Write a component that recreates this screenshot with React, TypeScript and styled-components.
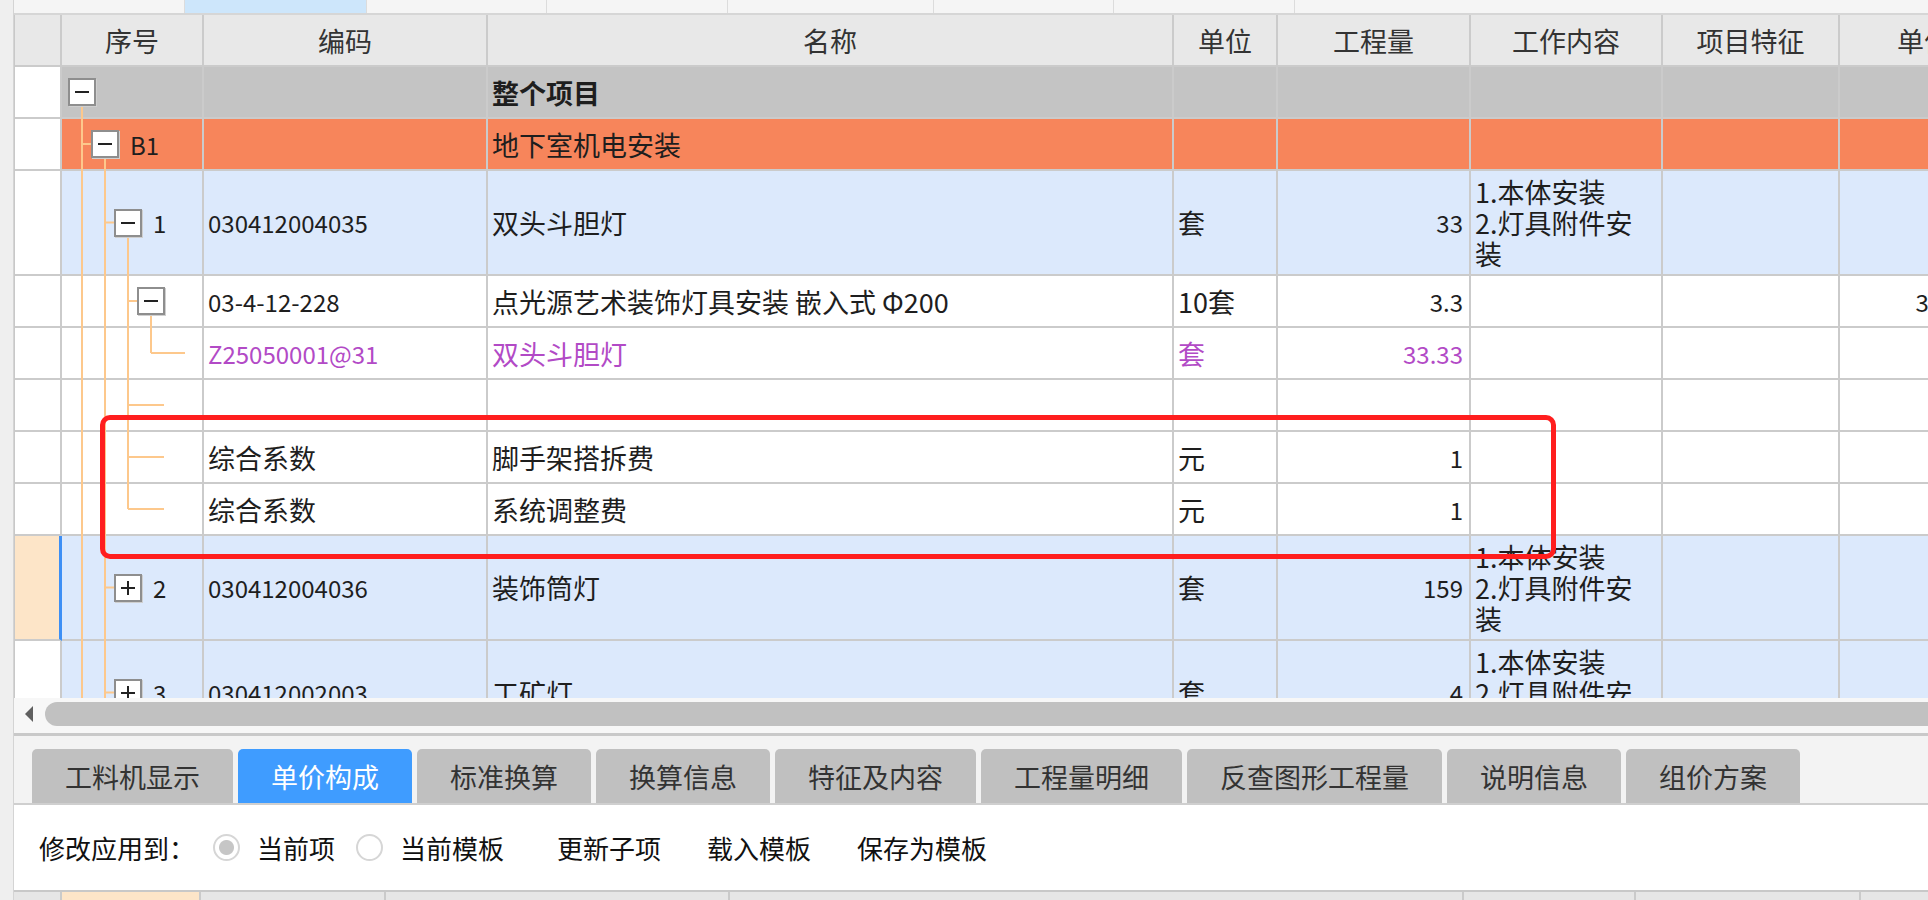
import React from "react";
import styled, { createGlobalStyle } from "styled-components";

const GlobalStyle = createGlobalStyle`
  html, body {
    margin: 0;
    padding: 0;
  }
  body {
    width: 1928px;
    height: 900px;
    overflow: hidden;
    background: #f4f4f4;
    font-family: "Noto Sans CJK SC", "Noto Sans", sans-serif;
    color: #1e1e1e;
  }
`;

const COLS = "47px 142px 284px 686px 104px 193px 192px 177px 170px";
const LINE = "#cbcbcb";
const GUIDE = "#fdc88c";

type Tone = "root" | "group" | "item" | "plain";

const toneBg: Record<Tone, string> = {
  root: "#c4c4c4",
  group: "#f7855b",
  item: "#dce9fc",
  plain: "#ffffff",
};

interface TreeSpec {
  full: number[];
  upTo?: number;
  tick?: [number, number];
  down?: number;
  box?: { level: number; sign: "-" | "+" };
  indent: number;
  label?: string;
}

interface RowData {
  tone: Tone;
  h: number;
  tree: TreeSpec;
  code?: string;
  name?: string;
  unit?: string;
  qty?: string;
  work?: string;
  price?: string;
  bold?: boolean;
  purple?: boolean;
  marked?: boolean;
}

const WORK = "1.本体安装\n2.灯具附件安\n装";

const rows: RowData[] = [
  {
    tone: "root",
    h: 52,
    tree: { full: [], down: 0, box: { level: 0, sign: "-" }, indent: 0 },
    name: "整个项目",
    bold: true,
  },
  {
    tone: "group",
    h: 52,
    tree: { full: [0], tick: [20, 29], down: 1, box: { level: 1, sign: "-" }, indent: 1, label: "B1" },
    name: "地下室机电安装",
  },
  {
    tone: "item",
    h: 105,
    tree: { full: [0, 1], tick: [43, 52], down: 2, box: { level: 2, sign: "-" }, indent: 2, label: "1" },
    code: "030412004035",
    name: "双头斗胆灯",
    unit: "套",
    qty: "33",
    work: WORK,
  },
  {
    tone: "plain",
    h: 52,
    tree: { full: [0, 1, 2], tick: [66, 75], down: 3, box: { level: 3, sign: "-" }, indent: 3 },
    code: "03-4-12-228",
    name: "点光源艺术装饰灯具安装 嵌入式 Φ200",
    unit: "10套",
    qty: "3.3",
    price: "3366.92",
  },
  {
    tone: "plain",
    h: 52,
    tree: { full: [0, 1, 2], upTo: 3, tick: [89, 123], indent: 4 },
    code: "Z25050001@31",
    name: "双头斗胆灯",
    unit: "套",
    qty: "33.33",
    purple: true,
  },
  {
    tone: "plain",
    h: 52,
    tree: { full: [0, 1, 2], tick: [66, 102], indent: 3 },
  },
  {
    tone: "plain",
    h: 52,
    tree: { full: [0, 1, 2], tick: [66, 102], indent: 3 },
    code: "综合系数",
    name: "脚手架搭拆费",
    unit: "元",
    qty: "1",
  },
  {
    tone: "plain",
    h: 52,
    tree: { full: [0, 1], upTo: 2, tick: [66, 102], indent: 3 },
    code: "综合系数",
    name: "系统调整费",
    unit: "元",
    qty: "1",
  },
  {
    tone: "item",
    h: 105,
    tree: { full: [0, 1], tick: [43, 52], box: { level: 2, sign: "+" }, indent: 2, label: "2" },
    code: "030412004036",
    name: "装饰筒灯",
    unit: "套",
    qty: "159",
    work: WORK,
    marked: true,
  },
  {
    tone: "item",
    h: 105,
    tree: { full: [0, 1], tick: [43, 52], box: { level: 2, sign: "+" }, indent: 2, label: "3" },
    code: "030412002003",
    name: "工矿灯",
    unit: "套",
    qty: "4",
    work: WORK,
  },
];

const headers = ["", "序号", "编码", "名称", "单位", "工程量", "工作内容", "项目特征", "单价"];

const topCells = [171, 182, 180, 181, 206, 180, 181];

const tabs = [
  "工料机显示",
  "单价构成",
  "标准换算",
  "换算信息",
  "特征及内容",
  "工程量明细",
  "反查图形工程量",
  "说明信息",
  "组价方案",
];

const bottomCols = [48, 139, 185, 344, 734, 172, 225, 200];

const isLatin = (s?: string) => !!s && /^[\x00-\x7f]+$/.test(s);

function Guides({ spec, h }: { spec: TreeSpec; h: number }) {
  const c = (h - 2) / 2;
  const gx = (l: number) => 20 + 23 * l;
  return (
    <GuideSvg width={142} height={h}>
      {spec.full.map((l) => (
        <line key={l} x1={gx(l)} x2={gx(l)} y1={0} y2={h} />
      ))}
      {spec.upTo !== undefined && (
        <line x1={gx(spec.upTo)} x2={gx(spec.upTo)} y1={0} y2={c} />
      )}
      {spec.tick && <line x1={spec.tick[0]} x2={spec.tick[1]} y1={c} y2={c} />}
      {spec.down !== undefined && (
        <line x1={gx(spec.down)} x2={gx(spec.down)} y1={c + 14} y2={h} />
      )}
    </GuideSvg>
  );
}

function Sign({ sign }: { sign: "-" | "+" }) {
  return (
    <svg width="16" height="16" viewBox="0 0 16 16">
      <line x1="1" y1="8" x2="15" y2="8" stroke="#222" strokeWidth="2" />
      {sign === "+" && <line x1="8" y1="1" x2="8" y2="15" stroke="#222" strokeWidth="2" />}
    </svg>
  );
}

function DataRow({ row }: { row: RowData }) {
  const bg = toneBg[row.tone];
  const color = row.purple ? "#b24ac6" : undefined;
  return (
    <Row $h={row.h}>
      <HeadCell $marked={row.marked} />
      <TreeCell $bg={bg} $indent={6 + 23 * (row.tree.box ? row.tree.box.level : row.tree.indent)}>
        <Guides spec={row.tree} h={row.h} />
        {row.tree.box && (
          <Expander>
            <Sign sign={row.tree.box.sign} />
          </Expander>
        )}
        {row.tree.label && <TreeLabel>{row.tree.label}</TreeLabel>}
      </TreeCell>
      <Cell $bg={bg} $latin={isLatin(row.code)} $color={color}>
        {row.code}
      </Cell>
      <Cell $bg={bg} $bold={row.bold} $color={color}>
        {row.name}
      </Cell>
      <Cell $bg={bg} $color={color}>
        {row.unit}
      </Cell>
      <Cell $bg={bg} $align="right" $latin $color={color}>
        {row.qty}
      </Cell>
      <Cell $bg={bg} $multi>
        {row.work}
      </Cell>
      <Cell $bg={bg} />
      <Cell $bg={bg} $align="right" $latin>
        {row.price}
      </Cell>
    </Row>
  );
}

export default function App() {
  return (
    <Page>
      <GlobalStyle />
      <LeftStrip />
      <Main>
        <TopStrip>
          {topCells.map((w, i) => (
            <TopCell key={i} $w={w} $active={i === 1} />
          ))}
          <TopCell $w={0} $grow />
        </TopStrip>
        <GridArea>
          <Row $h={52}>
            {headers.map((h, i) => (
              <HeaderCell key={i}>{h}</HeaderCell>
            ))}
          </Row>
          {rows.map((r, i) => (
            <DataRow key={i} row={r} />
          ))}
        </GridArea>
        <HScroll>
          <ArrowLeft />
          <Thumb />
        </HScroll>
        <TabBar>
          {tabs.map((t) => (
            <Tab key={t} $active={t === "单价构成"}>
              {t}
            </Tab>
          ))}
        </TabBar>
        <ToolRow>
          <ToolLabel>修改应用到：</ToolLabel>
          <RadioOption>
            <Radio $checked />
            当前项
          </RadioOption>
          <RadioOption>
            <Radio />
            当前模板
          </RadioOption>
          <Actions>
            <span>更新子项</span>
            <span>载入模板</span>
            <span>保存为模板</span>
          </Actions>
        </ToolRow>
        <BottomHeader>
          {bottomCols.map((w, i) => (
            <BottomCell key={i} $w={w} $accent={i === 1} />
          ))}
        </BottomHeader>
      </Main>
      <Highlight />
    </Page>
  );
}

const Page = styled.div`
  position: relative;
  display: flex;
  width: 1928px;
  height: 900px;
  overflow: hidden;
`;

const LeftStrip = styled.div`
  width: 13px;
  flex: none;
  background: #efefef;
  border-right: 1px solid #d4d4d4;
`;

const Main = styled.div`
  flex: 1;
  min-width: 0;
  display: flex;
  flex-direction: column;
  overflow: hidden;
`;

const TopStrip = styled.div`
  box-sizing: border-box;
  height: 15px;
  display: flex;
  background: #f5f5f5;
  border-bottom: 2px solid #d6d6d6;
  flex: none;
`;

const TopCell = styled.div<{ $w: number; $active?: boolean; $grow?: boolean }>`
  box-sizing: border-box;
  width: ${(p) => p.$w}px;
  flex: ${(p) => (p.$grow ? 1 : "none")};
  background: ${(p) => (p.$active ? "#cde6fb" : "#f5f5f5")};
  border-right: ${(p) => (p.$grow ? "none" : "1px solid #dcdcdc")};
`;

const GridArea = styled.div`
  height: 683px;
  flex: none;
  overflow: hidden;
  border-left: 1px solid #c8c8c8;
  background: #fff;
`;

const Row = styled.div<{ $h: number }>`
  display: grid;
  grid-template-columns: ${COLS};
  height: ${(p) => p.$h}px;
`;

const HeaderCell = styled.div`
  box-sizing: border-box;
  border-right: 2px solid ${LINE};
  border-bottom: 2px solid ${LINE};
  background: #e8e8e8;
  display: flex;
  align-items: center;
  justify-content: center;
  font-size: 27px;
  color: #333;
  white-space: nowrap;
  overflow: hidden;
`;

const HeadCell = styled.div<{ $marked?: boolean }>`
  box-sizing: border-box;
  border-bottom: 2px solid ${LINE};
  border-right: ${(p) => (p.$marked ? "3px solid #3d8ff5" : `2px solid ${LINE}`)};
  background: ${(p) => (p.$marked ? "#fde5c8" : "#fff")};
`;

const Cell = styled.div<{
  $bg: string;
  $align?: "left" | "right";
  $latin?: boolean;
  $bold?: boolean;
  $color?: string;
  $multi?: boolean;
}>`
  box-sizing: border-box;
  border-right: 2px solid ${LINE};
  border-bottom: 2px solid ${LINE};
  background: ${(p) => p.$bg};
  display: flex;
  align-items: center;
  justify-content: ${(p) => (p.$align === "right" ? "flex-end" : "flex-start")};
  padding: 0 6px 0 4px;
  font-size: ${(p) => (p.$latin ? 24 : 27)}px;
  font-weight: ${(p) => (p.$bold ? 700 : 400)};
  color: ${(p) => p.$color || "#1e1e1e"};
  line-height: 31px;
  white-space: ${(p) => (p.$multi ? "pre-line" : "nowrap")};
  overflow: hidden;
`;

const TreeCell = styled(Cell)<{ $indent: number }>`
  position: relative;
  padding-left: ${(p) => p.$indent}px;
  overflow: visible;
`;

const GuideSvg = styled.svg`
  position: absolute;
  left: 0;
  top: 0;
  stroke: ${GUIDE};
  stroke-width: 2;
  pointer-events: none;
`;

const Expander = styled.span`
  position: relative;
  box-sizing: border-box;
  width: 28px;
  height: 28px;
  flex: none;
  display: inline-flex;
  align-items: center;
  justify-content: center;
  background: #fff;
  border: 2px solid #8e8e8e;
  box-shadow: 1px 1px 0 #cfcfcf;
`;

const TreeLabel = styled.span`
  position: relative;
  margin-left: 11px;
  font-size: 24px;
  color: #1e1e1e;
`;

const HScroll = styled.div`
  box-sizing: border-box;
  height: 38px;
  flex: none;
  display: flex;
  align-items: center;
  gap: 12px;
  padding: 0 0 3px 11px;
  background: #f7f7f7;
  border-bottom: 3px solid #c9c9c9;
`;

const ArrowLeft = styled.span`
  width: 0;
  height: 0;
  border-top: 8px solid transparent;
  border-bottom: 8px solid transparent;
  border-right: 8px solid #5f5f5f;
`;

const Thumb = styled.div`
  flex: 1;
  height: 24px;
  margin-right: -30px;
  border-radius: 12px;
  background: #c1c1c1;
`;

const TabBar = styled.div`
  box-sizing: border-box;
  height: 69px;
  flex: none;
  display: flex;
  align-items: flex-end;
  gap: 5px;
  padding-left: 18px;
  background: #f3f3f3;
  border-bottom: 2px solid #cfcfcf;
`;

const Tab = styled.div<{ $active?: boolean }>`
  height: 54px;
  padding: 0 33px;
  display: flex;
  align-items: center;
  border-radius: 5px 5px 0 0;
  background: ${(p) => (p.$active ? "#3f9cff" : "#c0c0c0")};
  color: ${(p) => (p.$active ? "#fff" : "#333")};
  font-size: 27px;
  white-space: nowrap;
`;

const ToolRow = styled.div`
  height: 85px;
  flex: none;
  display: flex;
  align-items: center;
  padding-left: 25px;
  background: #fff;
  font-size: 26px;
  color: #111;
  white-space: nowrap;
`;

const ToolLabel = styled.span`
  margin-right: 18px;
`;

const RadioOption = styled.label`
  display: flex;
  align-items: center;
  gap: 17px;
  margin-right: 21px;
`;

const Radio = styled.span<{ $checked?: boolean }>`
  box-sizing: border-box;
  width: 27px;
  height: 27px;
  border-radius: 50%;
  border: 2px solid #d6d6d6;
  background: ${(p) => (p.$checked ? "radial-gradient(circle, #c6c6c6 0 7px, #fff 8px)" : "#fff")};
`;

const Actions = styled.div`
  display: flex;
  gap: 46px;
  margin-left: 32px;
`;

const BottomHeader = styled.div`
  flex: 1;
  display: flex;
  border-top: 2px solid #c8c8c8;
  background: #e6e6e6;
`;

const BottomCell = styled.div<{ $w: number; $accent?: boolean }>`
  box-sizing: border-box;
  width: ${(p) => p.$w}px;
  flex: none;
  border-right: 2px solid #cacaca;
  background: ${(p) => (p.$accent ? "#fde5c8" : "#e6e6e6")};
`;

const Highlight = styled.div`
  position: absolute;
  z-index: 10;
  left: 100px;
  top: 415px;
  width: 1456px;
  height: 144px;
  box-sizing: border-box;
  border: 5px solid #ff1e1e;
  border-radius: 10px;
  pointer-events: none;
`;
